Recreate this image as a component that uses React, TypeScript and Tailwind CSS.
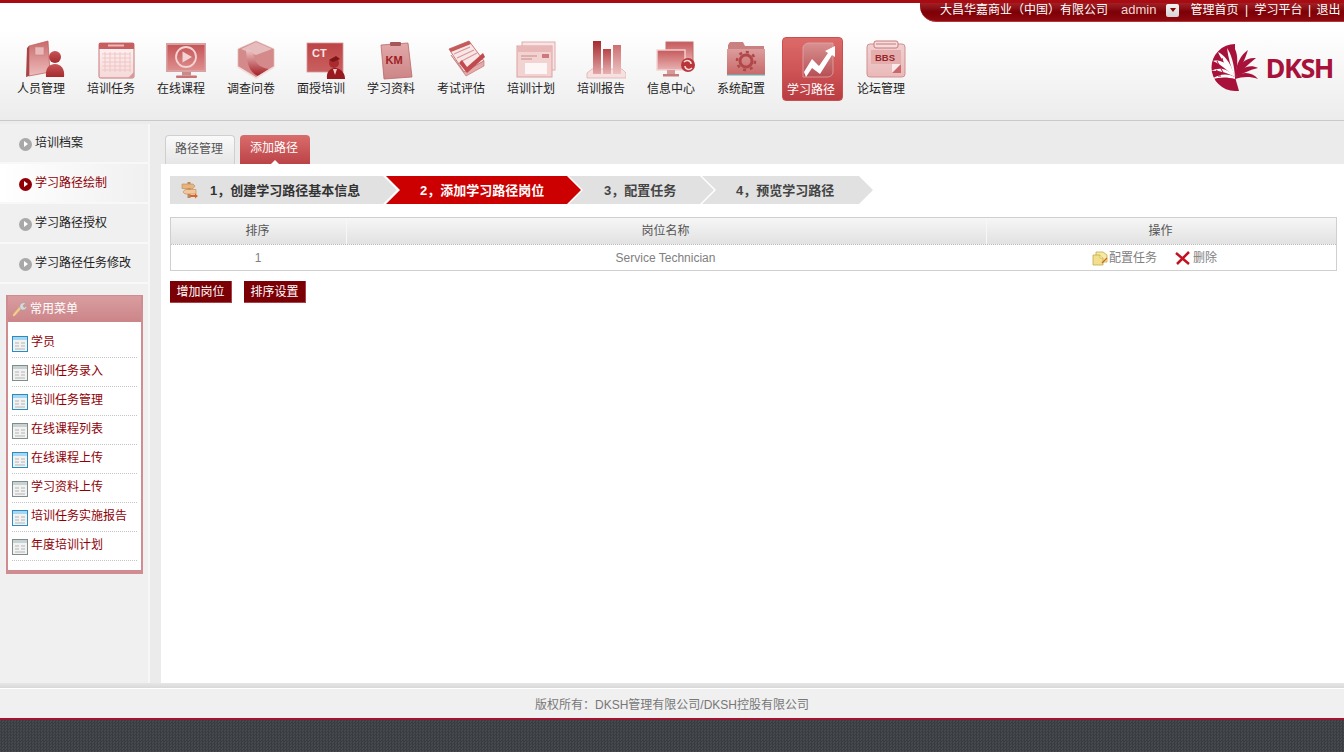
import React from "react";

const Grad = ({ id, a, b, h = false }: { id: string; a: string; b: string; h?: boolean }) => (
  <defs>
    <linearGradient id={id} x1="0" y1="0" x2={h ? "1" : "0"} y2={h ? "0" : "1"}>
      <stop offset="0" stopColor={a} />
      <stop offset="1" stopColor={b} />
    </linearGradient>
  </defs>
);

const S = ({ children }: { children: React.ReactNode }) => (
  <svg viewBox="0 0 40 40" width="40" height="40" className="block">
    {children}
  </svg>
);

const IconPerson = () => (
  <S>
    <Grad id="p1" a="#c96a6a" b="#eebcbc" />
    <Grad id="p2" a="#c75557" b="#a52a2e" />
    <path d="M3 6 L22 1 L24 32 L3 36 Z" fill="url(#p1)" stroke="#b95a5a" strokeWidth="0.7" />
    <path d="M1 8 L3 6 L3 36 L0 37 Z" fill="#a84448" />
    <rect x="9" y="7" width="9" height="8" fill="#e9b8b8" stroke="#c27b7b" strokeWidth="0.5" />
    <circle cx="29" cy="17" r="6" fill="url(#p2)" />
    <path d="M20 37 C19 27 24 24 29 24 C35 24 39 29 38 37 Z" fill="url(#p2)" />
  </S>
);
const IconCalendar = () => (
  <S>
    <Grad id="c1" a="#fff4f4" b="#f5d9d9" />
    <rect x="3" y="3" width="35" height="35" rx="1.5" fill="url(#c1)" stroke="#c87878" />
    <rect x="3" y="3" width="35" height="6" fill="#c75f61" />
    <rect x="12" y="4.500" width="16" height="2" fill="#eeb8b8" />
    <path d="M6 14H35M6 18H35M6 22H35M6 26H35M6 30H35M9 12V32M14 12V32M19 12V32M24 12V32M29 12V32M34 12V32" stroke="#efc3c3" strokeWidth="0.9" />
    <path d="M38 32 L32 38 L38 38 Z" fill="#d69a9a" />
  </S>
);
const IconVideo = () => (
  <S>
    <Grad id="v1" a="#c65557" b="#dd8d8d" />
    <rect x="0" y="3" width="40" height="29" fill="#d9a2a2" />
    <rect x="1.500" y="5" width="37" height="25" fill="url(#v1)" />
    <circle cx="20" cy="17" r="10" fill="none" stroke="#f3d3d3" strokeWidth="1.800" />
    <path d="M16.500 11.500 L26 17 L16.500 22.500 Z" fill="#f2d4d4" />
    <rect x="16" y="32" width="9" height="3.500" fill="#c98a8a" />
    <rect x="10" y="35.500" width="21" height="2.500" rx="1" fill="#c77373" />
  </S>
);
const IconSurvey = () => (
  <S>
    <Grad id="s1" a="#efc6c6" b="#a31f26" />
    <path d="M20 1 L38 9 L38 27 L20 38 L2 27 L2 9 Z" fill="#d48a8a" stroke="#e4b9b9" strokeWidth="0.7" />
    <path d="M20 2 L36 9 L20 15 L5 9 Z" fill="#e7bcbc" />
    <path d="M10 10 C16 9 17 12 18 17 C20 25 26 28 33 29 L22 36 C15 33 11 27 10 10 Z" fill="url(#s1)" />
    <path d="M2 27 L20 38 L38 27" fill="none" stroke="#f2dcdc" strokeWidth="1.500" />
  </S>
);
const IconCT = () => (
  <S>
    <Grad id="t1" a="#bd4346" b="#c9605f" />
    <rect x="1" y="3" width="36" height="29" fill="url(#t1)" stroke="#d49a9a" strokeWidth="0.8" />
    <text x="6" y="17" fontSize="11" fontWeight="700" fontFamily="'Liberation Sans',sans-serif" fill="#f8e4e4">CT</text>
    <circle cx="28" cy="23" r="5" fill="#a92a2f" />
    <path d="M23 20 L30 16 L34 19 L27 22 Z" fill="#7d1518" />
    <path d="M21 39 C20 32 24 28 29 28 C35 28 39 33 39 39 Z" fill="#98191e" />
    <path d="M27 29 L29 35 L31 29 Z" fill="#f0c9c9" />
  </S>
);
const IconKM = () => (
  <S>
    <Grad id="k1" a="#e3a9a9" b="#cc8585" />
    <path d="M5 5 L32 3 L36 37 L8 39 Z" fill="url(#k1)" stroke="#b96a6a" strokeWidth="0.8" />
    <rect x="14" y="2" width="11" height="4" rx="1" fill="#a7575a" />
    <text x="9.500" y="24" fontSize="11" fontWeight="700" fontFamily="'Liberation Sans',sans-serif" fill="#9d1e24">KM</text>
  </S>
);
const IconExam = () => (
  <S>
    <path d="M3 9 L23 1 L38 21 L18 32 Z" fill="#f9e6e6" stroke="#c97a7a" />
    <path d="M3 9 L23 1 L25 4 L5 12 Z" fill="#c55a5c" />
    <path d="M8 14 L24 7 M11 18 L28 10 M14 22 L31 13" stroke="#d89999" strokeWidth="1.200" />
    <path d="M5 15 L20 36 L38 26 L38 21 L18 32 Z" fill="#e2aaaa" stroke="#c47979" strokeWidth="0.7" />
    <path d="M16 20 L21 27 L37 13 L39 17 L21 33 L13 23 Z" fill="#c04a4d" />
  </S>
);
const IconPlan = () => (
  <S>
    <rect x="6" y="2" width="33" height="28" fill="#f8e4e4" stroke="#e0abab" />
    <rect x="1" y="6" width="35" height="31" fill="#f3d2d2" stroke="#dba0a0" />
    <rect x="2" y="7" width="33" height="5" fill="#e8b8b8" />
    <path d="M5 16 H21 M5 19 H16" stroke="#c68a8a" strokeWidth="1" />
    <rect x="26" y="14" width="7" height="4" fill="#cc7a7c" />
    <rect x="9" y="23" width="22" height="11" fill="#fdf6f6" />
  </S>
);
const IconReport = () => (
  <S>
    <Grad id="r1" a="#a52a2e" b="#e3a6a6" />
    <Grad id="r2" a="#b84447" b="#e7b1b1" />
    <Grad id="r3" a="#cb7072" b="#edc2c2" />
    <path d="M1 33 L6 29 L36 29 L40 33 L40 38 L1 38 Z" fill="#f7e0e0" stroke="#dcaaaa" strokeWidth="0.7" />
    <rect x="7" y="1" width="8" height="33" fill="url(#r1)" />
    <rect x="17" y="9" width="8" height="25" fill="url(#r2)" />
    <rect x="27" y="5" width="8" height="29" fill="url(#r3)" />
  </S>
);
const IconInfo = () => (
  <S>
    <Grad id="i1" a="#c65a5c" b="#e8b1b1" />
    <rect x="10" y="2" width="27" height="21" fill="url(#i1)" stroke="#c26c6c" />
    <rect x="1" y="10" width="28" height="20" fill="url(#i1)" stroke="#f2d4d4" strokeWidth="1.400" />
    <rect x="11" y="30" width="8" height="4" fill="#d49999" />
    <rect x="7" y="34" width="16" height="2.500" fill="#c77c7c" />
    <circle cx="32" cy="25" r="7" fill="#b93539" />
    <path d="M28 22 C31 19 35 21 35 24 M36 28 C33 31 29 29 29 26" fill="none" stroke="#f8dede" strokeWidth="1.500" />
  </S>
);
const IconFolder = () => (
  <S>
    <Grad id="f1" a="#dc9d9d" b="#c96a6a" />
    <path d="M2 5 L4 2 L17 2 L19 6 L38 6 L38 31 L2 31 Z" fill="#c98080" />
    <path d="M1 9 L39 9 L39 34 L1 34 Z" fill="url(#f1)" />
    <rect x="1" y="34" width="38" height="1.500" fill="#7fa0a0" />
    <circle cx="20" cy="21" r="6" fill="none" stroke="#b2474a" strokeWidth="3" />
    <circle cx="20" cy="21" r="9" fill="none" stroke="#b2474a" strokeWidth="2.500" strokeDasharray="3 4" />
  </S>
);
const IconPath = () => (
  <S>
    <Grad id="a1" a="#d99090" b="#b65055" />
    <path d="M6 7 C6 4 9 2 12 2 L36 2 L36 31 C36 34 33 36 30 36 L6 36 Z" fill="url(#a1)" stroke="#e2a8a8" strokeWidth="0.8" />
    <path d="M7 31 L15 18 L22 25 L31 12 L28 10 L38 5 L38 16 L35 14 L23 33 L15 27 L9 36 Z" fill="#fff" />
  </S>
);
const IconBBS = () => (
  <S>
    <Grad id="b1" a="#f1d0d0" b="#eab9b9" />
    <rect x="1" y="4" width="38" height="33" rx="3" fill="url(#b1)" stroke="#d28f8f" />
    <rect x="8" y="1" width="24" height="7" rx="2" fill="#f5dcdc" stroke="#c97878" />
    <path d="M10 4 H30" stroke="#c97878" />
    <rect x="5" y="10" width="30" height="14" fill="#e5aeae" />
    <text x="9" y="21" fontSize="9.500" fontWeight="700" fontFamily="'Liberation Sans',sans-serif" fill="#97252a">BBS</text>
    <path d="M26 24 H35 V33 H26 Z" fill="#fbeaea" />
    <path d="M26 33 L35 24 V33 Z" fill="#c9696b" />
  </S>
);

const Logo = () => (
  <svg viewBox="0 0 50 48" width="50" height="48" className="block">
    <path d="M25 0 A23.500 23.500 0 0 0 25 47 Z" fill="#a8123a" />
    <g fill="#fff">
      <path d="M25 33 C20 17 14 11 8 8 C11 15 17 24 25 33 Z" />
      <path d="M25 33 C18 19 11 15 3 17 C10 20 17 26 25 33 Z" />
      <path d="M25 33 C17 24 9 23 1 27 C9 26 17 29 25 33 Z" />
      <path d="M25 33 C17 29 9 30 2 35 C10 33 18 33 25 35 Z" />
      <path d="M25 33 C24 19 21 10 17 4 C18 13 21 24 25 33 Z" />
    </g>
    <path d="M7 17 l2 4 M12 14 l1 4 M6 26 l3 2 M11 25 l2 3 M8 32 l3 0" stroke="#a8123a" strokeWidth="1" />
    <g fill="#a8123a">
      <path d="M25 33 L25 5 C28 11 28 22 25 33 Z" />
      <path d="M25 33 C26 19 31 11 38 6 C35 15 31 25 25 33 Z" />
      <path d="M25 33 C28 20 36 13 46 14 C38 20 32 27 25 33 Z" />
      <path d="M25 33 C31 23 40 20 48 24 C39 26 32 30 25 33 Z" />
      <path d="M25 33 C33 27 42 28 48 35 C39 32 32 33 25 35 Z" />
    </g>
    <path d="M25 33 L29 47 L25 47 Z" fill="#a8123a" />
  </svg>
);

const nav = [
  ["人员管理", IconPerson],
  ["培训任务", IconCalendar],
  ["在线课程", IconVideo],
  ["调查问卷", IconSurvey],
  ["面授培训", IconCT],
  ["学习资料", IconKM],
  ["考试评估", IconExam],
  ["培训计划", IconPlan],
  ["培训报告", IconReport],
  ["信息中心", IconInfo],
  ["系统配置", IconFolder],
  ["学习路径", IconPath],
  ["论坛管理", IconBBS],
] as const;

const sideItems = ["培训档案", "学习路径绘制", "学习路径授权", "学习路径任务修改"];
const menuItems = [
  "学员",
  "培训任务录入",
  "培训任务管理",
  "在线课程列表",
  "在线课程上传",
  "学习资料上传",
  "培训任务实施报告",
  "年度培训计划",
];

const Bullet = ({ active }: { active: boolean }) => (
  <span
    className={`mt-[2px] flex h-[13px] w-[13px] shrink-0 items-center justify-center rounded-full ${
      active ? "bg-[#8f0006]" : "bg-[#a8a8a8]"
    }`}
  >
    <span className="h-0 w-0 border-y-[3px] border-l-[4px] border-y-transparent border-l-white" />
  </span>
);

const ListIcon = ({ blue }: { blue: boolean }) => (
  <svg viewBox="0 0 16 16" width="16" height="16" className="block shrink-0">
    <rect x="0.500" y="0.500" width="15" height="15" fill="#f2f2f2" stroke={blue ? "#2b8cc4" : "#7f8c8c"} />
    <rect x="1" y="1" width="14" height="3" fill={blue ? "#a8d6ee" : "#c8d2d2"} />
    <path d="M3 7H7M9 7H13M3 10H7M9 10H13M3 13H13" stroke="#b4b4b4" />
  </svg>
);

const ArrowBadge = () => (
  <span className="ml-[10px] flex h-[13px] w-[13px] items-center justify-center rounded-[2px] bg-gradient-to-b from-[#f4f4f4] to-[#d4d4d4]">
    <span className="h-0 w-0 border-x-[3px] border-t-[4px] border-x-transparent border-t-[#8b0000]" />
  </span>
);

const SignPost = () => (
  <svg viewBox="0 0 18 18" width="18" height="18" className="block">
    <rect x="7.500" y="1" width="3" height="16" fill="#b98a5a" />
    <path d="M2 3 H13 L15 5 L13 7.500 H2 Z" fill="#e8b47e" stroke="#c08552" strokeWidth="0.6" />
    <path d="M16 8.500 H5 L3 11 L5 13 H16 Z" fill="#efc79b" stroke="#c08552" strokeWidth="0.6" />
    <path d="M10 14 H15 V12.500 L18 15 L15 17.500 V16 H10 Z" fill="#d9632a" />
  </svg>
);

const NoteIcon = () => (
  <svg viewBox="0 0 16 16" width="16" height="16" className="block">
    <path d="M4 2 H11 L15 5 V12 H4 Z" fill="#f7e9a0" stroke="#c2a94e" strokeWidth="0.8" />
    <path d="M1 5 H8 L11 8 V15 H1 Z" fill="#f3df8b" stroke="#c2a94e" strokeWidth="0.8" />
    <path d="M8 5 V8 H11" fill="#fff6c8" stroke="#c2a94e" strokeWidth="0.6" />
    <path d="M10 13 L15 8" stroke="#c86a2a" strokeWidth="1.300" />
  </svg>
);

const XIcon = () => (
  <svg viewBox="0 0 15 15" width="15" height="15" className="block">
    <path d="M1 3 L14 14 M14 2 L2 14" stroke="#c2121f" strokeWidth="2.500" />
  </svg>
);

const Wrench = () => (
  <svg viewBox="0 0 16 16" width="16" height="16" className="block">
    <path d="M2 14 L9 6" stroke="#f0cf85" strokeWidth="2.400" strokeLinecap="round" />
    <path d="M8 7 C7 3 10 1 14 2 L11 4.500 L12 6.500 L15 5 C15 8 12 10 9 8.500 Z" fill="#d8d8d8" stroke="#9a9a9a" strokeWidth="0.5" />
  </svg>
);

export default function App() {
  return (
    <div className="flex h-[752px] w-[1344px] flex-col overflow-hidden bg-[#ececec] font-['Liberation_Sans','Noto_Sans_CJK_SC',sans-serif] text-xs">
      {/* header */}
      <header className="h-[121px] shrink-0 border-b border-[#c9c9c9] bg-gradient-to-b from-white from-25% to-[#ececec]">
        <div className="flex h-[22px] justify-end border-t-[3px] border-[#a80c12]">
          <div className="flex h-[19px] w-[424px] items-center rounded-bl-[16px] border-b border-[#b5343a] bg-gradient-to-b from-[#a02026] via-[#7d0006] to-[#8e0a0f] pb-[4px] pl-[20px] text-white">
            <span className="w-[168px] whitespace-nowrap">大昌华嘉商业（中国）有限公司</span>
            <span className="ml-[13px] text-[13px] text-[#f3d6d6]">admin</span>
            <ArrowBadge />
            <span className="ml-[11px]">管理首页</span>
            <span className="w-[16px] text-center">|</span>
            <span>学习平台</span>
            <span className="w-[14px] text-center">|</span>
            <span>退出</span>
          </div>
        </div>
        <div className="flex items-start justify-between pl-[6px] pr-[11px] pt-[15px]">
          <nav className="flex">
            {nav.map(([label, Icon], i) => {
              const active = i === 11;
              return (
                <div key={label} className="flex h-[64px] w-[70px] justify-center">
                  <div
                    className={`flex h-[64px] w-[61px] flex-col items-center rounded-[4px] pt-[3px] ${
                      active
                        ? "ml-[2px] border border-[#c9504f] bg-gradient-to-b from-[#dc6a69] via-[#cf5557] to-[#b83c41] text-white"
                        : "text-[#222222]"
                    }`}
                  >
                    <span className="ml-[10px]">
                      <Icon />
                    </span>
                    <span className={`mt-[1px] whitespace-nowrap leading-[16px] ${active ? "mr-[2px]" : ""}`}>{label}</span>
                  </div>
                </div>
              );
            })}
          </nav>
          <div className="mt-[7px] flex items-center">
            <Logo />
            <span className="mb-[2px] ml-[6px] font-['Open_Sans',sans-serif] text-[27px] font-bold leading-none tracking-[-1.5px] text-[#a8123a]">
              DKSH
            </span>
          </div>
        </div>
      </header>

      {/* body */}
      <div className="flex min-h-0 flex-1 pt-[3px]">
        <aside className="w-[150px] shrink-0 border-r-2 border-[#f7f7f7] bg-[#f0f0f0]">
          {sideItems.map((t, i) => (
            <div
              key={t}
              className={`flex h-[40px] items-center gap-[3px] border-b-2 border-[#f8f8f8] pl-[19px] ${
                i === 1
                  ? "bg-gradient-to-r from-white to-[#f0f0f0] text-[#8f0006]"
                  : "text-[#222222]"
              }`}
            >
              <Bullet active={i === 1} />
              <span className="whitespace-nowrap">{t}</span>
            </div>
          ))}
          <div className="ml-[6px] mt-[11px] h-[279px] w-[137px] border-x-2 border-b-4 border-t border-[#d08d91] bg-white">
            <div className="flex h-[26px] items-center gap-[2px] bg-gradient-to-b from-[#d99da0] to-[#cc8589] pl-[4px] text-white">
              <Wrench />
              <span>常用菜单</span>
            </div>
            <ul className="px-[4px] pt-[7px]">
              {menuItems.map((m, i) => (
                <li
                  key={m}
                  className="flex h-[29px] items-center gap-[3px] border-b border-dotted border-[#c4c4c4] pb-[2px] text-[#8f0006]"
                >
                  <span className="mt-[3px]">
                    <ListIcon blue={i % 2 === 0} />
                  </span>
                  <span className="whitespace-nowrap">{m}</span>
                </li>
              ))}
            </ul>
          </div>
        </aside>

        <main className="flex min-w-0 flex-1 flex-col bg-[#ebebeb] pl-[11px]">
          <div className="flex h-[40px] items-end gap-[5px] pl-[4px]">
            <div className="flex h-[29px] w-[70px] items-center justify-center rounded-t-[4px] border border-b-0 border-[#cfcfcf] bg-gradient-to-b from-[#fafafa] to-[#e6e6e6] pb-[3px] pr-[2px] text-[#555555]">
              路径管理
            </div>
            <div className="relative flex h-[29px] w-[70px] items-center justify-center rounded-t-[4px] bg-gradient-to-b from-[#da6c6c] to-[#bb4347] pb-[3px] pr-[2px] text-white">
              添加路径
              <span className="absolute bottom-0 left-1/2 h-0 w-0 -translate-x-1/2 border-x-[4px] border-b-[4px] border-x-transparent border-b-white" />
            </div>
          </div>
          <div className="flex-1 bg-white pl-[9px] pr-[7px] pt-[12px]">
            {/* steps */}
            <div className="flex h-[28px] text-[13px] font-bold">
              <div className="relative flex w-[227px] items-center bg-[#e1e1e1] pl-[10px] text-[#333333] [clip-path:polygon(0_0,213px_0,227px_50%,213px_100%,0_100%)]">
                <SignPost />
                <span className="ml-[12px] whitespace-nowrap pt-[2px]">1，创建学习路径基本信息</span>
              </div>
              <div className="relative z-10 -ml-[11px] flex w-[195px] items-center bg-[#cc0000] pl-[34px] text-white [clip-path:polygon(0_0,181px_0,195px_50%,181px_100%,0_100%,14px_50%)]">
                <span className="whitespace-nowrap pt-[2px]">2，添加学习路径岗位</span>
              </div>
              <div className="-ml-[12px] flex w-[145px] items-center bg-[#e1e1e1] pl-[35px] text-[#444444] [clip-path:polygon(0_0,131px_0,145px_50%,131px_100%,0_100%,14px_50%)]">
                <span className="whitespace-nowrap pt-[2px]">3，配置任务</span>
              </div>
              <div className="-ml-[12px] flex w-[171px] items-center bg-[#e1e1e1] pl-[34px] text-[#444444] [clip-path:polygon(0_0,157px_0,171px_50%,157px_100%,0_100%,14px_50%)]">
                <span className="whitespace-nowrap pt-[2px]">4，预览学习路径</span>
              </div>
            </div>
            {/* table */}
            <div className="mt-[13px] w-[1167px] border border-[#cfcfcf]">
              <div className="flex h-[27px] items-center border-b border-dotted border-[#bdbdbd] bg-gradient-to-b from-[#f6f6f6] to-[#e2e2e2] text-[#555555]">
                <div className="flex h-full w-[176px] items-center justify-center border-r border-[#f7f7f7] pr-[2px]">排序</div>
                <div className="flex h-full w-[640px] items-center justify-center border-r border-[#f7f7f7] pr-[2px]">岗位名称</div>
                <div className="flex h-full flex-1 items-center justify-center pr-[2px]">操作</div>
              </div>
              <div className="flex h-[25px] items-center text-[#808080]">
                <div className="w-[176px] pr-[2px] text-center">1</div>
                <div className="w-[640px] pr-[3px] text-center">Service Technician</div>
                <div className="flex flex-1 items-center pl-[105px]">
                  <NoteIcon />
                  <span className="ml-[1px]">配置任务</span>
                  <span className="ml-[18px]">
                    <XIcon />
                  </span>
                  <span className="ml-[3px]">删除</span>
                </div>
              </div>
            </div>
            {/* buttons */}
            <div className="mt-[10px] flex gap-[12px]">
              <button className="h-[22px] w-[62px] border-b border-r border-[#a84448] bg-[#7b0005] text-xs text-white">增加岗位</button>
              <button className="h-[22px] w-[62px] border-b border-r border-[#a84448] bg-[#7b0005] text-xs text-white">排序设置</button>
            </div>
          </div>
        </main>
      </div>

      {/* footer */}
      <div className="h-[5px] shrink-0 bg-gradient-to-b from-[#e6e6e6] to-[#d9d9d9]" />
      <footer className="flex h-[30px] shrink-0 items-center justify-center border-t border-white bg-[#f0f0f0] pt-[2px] text-[#777777]">
        版权所有：DKSH管理有限公司/DKSH控股有限公司
      </footer>
      <div className="h-[34px] shrink-0 border-t-2 border-[#a5122f] [background:repeating-conic-gradient(#393c41_0_25%,#46494e_0_50%)_0_0/3px_3px]" />
    </div>
  );
}
